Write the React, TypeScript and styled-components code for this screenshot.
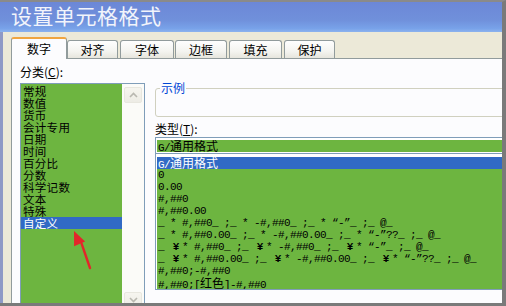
import React from 'react';
import styled, { createGlobalStyle } from 'styled-components';

const GlobalStyle = createGlobalStyle`
  html, body {
    margin: 0;
    padding: 0;
    background: #7a7a7a;
  }
  body {
    font-family: "Noto Sans CJK SC", "Liberation Sans", sans-serif;
    font-size: 12px;
    color: #000;
  }
`;

const Window = styled.div`
  position: relative;
  width: 502px;
  height: 301px;
  border-top: 2px solid #8a8a8a;
  border-right: 4px solid #7a7a7a;
  border-bottom: 3px solid #7a7a7a;
  overflow: hidden;
  display: flex;
  flex-direction: column;
  background: #ece9d8;
`;

const TitleBar = styled.div`
  height: 30px;
  flex-shrink: 0;
  box-sizing: border-box;
  padding: 1px 0 0 11px;
  line-height: 24px;
  font-size: 21px;
  letter-spacing: 0.5px;
  color: #f2f4fb;
  background: linear-gradient(to bottom, #6c87d7 0%, #7090db 60%, #78a2e9 88%, #8cb2ee 100%);
`;

const Body = styled.div`
  flex: 1;
  display: flex;
  flex-direction: column;
  min-height: 0;
  border-left: 3px solid #8e99c6;
  padding-left: 8px;
`;

const TabStrip = styled.div`
  height: 26px;
  flex-shrink: 0;
  display: flex;
  align-items: flex-end;
  position: relative;
  z-index: 1;
`;

const Tab = styled.div<{ $w: number; $active?: boolean; $gap?: number }>`
  box-sizing: border-box;
  width: ${(p) => p.$w}px;
  margin-right: ${(p) => p.$gap ?? 0}px;
  height: ${(p) => (p.$active ? 22 : 18)}px;
  margin-bottom: ${(p) => (p.$active ? -1 : 0)}px;
  border: 1px solid #919b9c;
  border-bottom: none;
  border-top: ${(p) => (p.$active ? '2px solid #f0a540' : '1px solid #919b9c')};
  border-radius: 3px 3px 0 0;
  background: ${(p) =>
    p.$active ? '#fcfcfe' : 'linear-gradient(to bottom, #fefefe 0%, #f4f4f0 60%, #e6e5dd 100%)'};
  display: flex;
  justify-content: center;
  padding-top: ${(p) => (p.$active ? 3 : 2)}px;
  line-height: 13px;
  font-size: 12px;
`;

const Panel = styled.div`
  flex: 1;
  min-height: 0;
  display: flex;
  gap: 10px;
  background: #fcfcfe;
  border-top: 1px solid #919b9c;
  border-left: 1px solid #919b9c;
  padding-left: 8px;
`;

const LeftCol = styled.div`
  width: 125px;
  flex-shrink: 0;
  display: flex;
  flex-direction: column;
`;

const Label = styled.div<{ $top: number }>`
  margin-top: ${(p) => p.$top}px;
  line-height: 14px;
  height: 14px;
  font-size: 12px;
  u {
    text-decoration: underline;
    text-underline-offset: 1px;
  }
`;

const CategoryBox = styled.div`
  margin-top: 4px;
  box-sizing: border-box;
  height: 228px;
  flex-shrink: 0;
  display: flex;
  border: 1px solid #7f9db9;
`;

const CategoryItems = styled.div`
  flex: 1;
  background: #6db540;
  padding-top: 1px;
`;

const Item = styled.div<{ $selected?: boolean }>`
  height: 12px;
  line-height: 12px;
  padding-left: 2px;
  font-size: 11.5px;
  letter-spacing: 0.3px;
  white-space: pre;
  background: ${(p) => (p.$selected ? '#316ac5' : 'transparent')};
  color: ${(p) => (p.$selected ? '#fff' : '#000')};
`;

const ScrollBar = styled.div`
  width: 22px;
  box-sizing: border-box;
  background: #fbfbf8;
  padding: 3px 1px 2px 2px;
  display: flex;
  flex-direction: column;
  justify-content: space-between;
`;

const ScrollButton = styled.div`
  width: 18px;
  height: 16px;
  box-sizing: border-box;
  border: 1px solid #e8e7df;
  border-radius: 2px;
  background: linear-gradient(to bottom, #f6f5ef 0%, #edece5 100%);
  display: flex;
  align-items: center;
  justify-content: center;
`;

const RightCol = styled.div`
  width: 362px;
  flex-shrink: 0;
  display: flex;
  flex-direction: column;
  padding-top: 23px;
`;

const Sample = styled.fieldset`
  margin: 0;
  padding: 0;
  min-width: 0;
  box-sizing: border-box;
  height: 35px;
  border: 1px solid #d0d0bf;
  border-radius: 3px;
`;

const SampleLegend = styled.legend`
  margin-left: 4px;
  padding: 0 1px;
  font-size: 12px;
  line-height: 12px;
  color: #0046d5;
`;

const TypeInput = styled.div`
  margin-top: 1px;
  border: 1px solid #7f9db9;
  border-bottom: none;
  padding: 2px 0 1px 1px;
  background: #fff;
`;

const FormatRow = styled.div<{ $selected?: boolean }>`
  height: 12px;
  line-height: 12px;
  padding-left: 1px;
  font-family: "Liberation Mono", monospace;
  font-size: 11px;
  letter-spacing: -0.6px;
  white-space: pre;
  background: ${(p) => (p.$selected ? '#316ac5' : '#6db540')};
  color: ${(p) => (p.$selected ? '#fff' : '#000')};
`;

const TypeList = styled.div`
  box-sizing: border-box;
  height: 137px;
  border: 1px solid #7f9db9;
  padding: 3px 0 0 1px;
  background: #fff;
  overflow: hidden;
`;

const Han = styled.span`
  font-family: "Noto Sans CJK SC", sans-serif;
  font-size: 12px;
  line-height: 12px;
  letter-spacing: 0;
`;

const Yen = styled.span`
  display: inline-block;
  width: 12px;
  text-align: center;
  font-weight: bold;
  letter-spacing: 0;
`;

const Annotation = styled.svg`
  position: absolute;
  left: 68px;
  top: 222px;
  pointer-events: none;
`;

const categories = ['常规', '数值', '货币', '会计专用', '日期', '时间', '百分比', '分数', '科学记数', '文本', '特殊', '自定义'];

const formats = [
  'G/通用格式',
  '0',
  '0.00',
  '#,##0',
  '#,##0.00',
  '_ * #,##0_ ;_ * -#,##0_ ;_ * “-”_ ;_ @_',
  '_ * #,##0.00_ ;_ * -#,##0.00_ ;_ * “-”??_ ;_ @_',
  '_ ¥* #,##0_ ;_ ¥* -#,##0_ ;_ ¥* “-”_ ;_ @_',
  '_ ¥* #,##0.00_ ;_ ¥* -#,##0.00_ ;_ ¥* “-”??_ ;_ @_',
  '#,##0;-#,##0',
  '#,##0;[红色]-#,##0',
];

const tabs = [
  { label: '数字', w: 56, gap: 0, active: true },
  { label: '对齐', w: 51, gap: 2 },
  { label: '字体', w: 54, gap: 1 },
  { label: '边框', w: 52, gap: 2 },
  { label: '填充', w: 53, gap: 2 },
  { label: '保护', w: 51, gap: 0 },
];

function renderFormat(text: string) {
  return text
    .split(/([\u4e00-\u9fff]+|¥)/)
    .filter(Boolean)
    .map((part, i) => {
      if (part === '¥') return <Yen key={i}>¥</Yen>;
      if (/[\u4e00-\u9fff]/.test(part)) return <Han key={i}>{part}</Han>;
      return <React.Fragment key={i}>{part}</React.Fragment>;
    });
}

function Chevron({ up }: { up?: boolean }) {
  return (
    <svg width="9" height="6" viewBox="0 0 9 6">
      <path
        d={up ? 'M1 5 L4.5 1.5 L8 5' : 'M1 1 L4.5 4.5 L8 1'}
        fill="none"
        stroke="#b9b8b0"
        strokeWidth="1.6"
      />
    </svg>
  );
}

export default function App() {
  return (
    <>
      <GlobalStyle />
      <Window>
        <TitleBar>设置单元格格式</TitleBar>
        <Body>
          <TabStrip>
            {tabs.map((t) => (
              <Tab key={t.label} $w={t.w} $gap={t.gap} $active={t.active}>
                {t.label}
              </Tab>
            ))}
          </TabStrip>
          <Panel>
            <LeftCol>
              <Label $top={6}>
                分类(<u>C</u>):
              </Label>
              <CategoryBox>
                <CategoryItems>
                  {categories.map((c) => (
                    <Item key={c} $selected={c === '自定义'}>
                      {c}
                    </Item>
                  ))}
                </CategoryItems>
                <ScrollBar>
                  <ScrollButton>
                    <Chevron up />
                  </ScrollButton>
                  <ScrollButton>
                    <Chevron />
                  </ScrollButton>
                </ScrollBar>
              </CategoryBox>
            </LeftCol>
            <RightCol>
              <Sample>
                <SampleLegend>示例</SampleLegend>
              </Sample>
              <Label $top={5}>
                类型(<u>T</u>):
              </Label>
              <TypeInput>
                <FormatRow>{renderFormat('G/通用格式')}</FormatRow>
              </TypeInput>
              <TypeList>
                {formats.map((f, i) => (
                  <FormatRow key={f} $selected={i === 0}>
                    {renderFormat(f)}
                  </FormatRow>
                ))}
              </TypeList>
            </RightCol>
          </Panel>
        </Body>
        <Annotation width="30" height="48" viewBox="0 0 30 48">
          <path d="M13.6 19.6 L22 44" stroke="#e3262a" strokeWidth="2.4" strokeLinecap="round" />
          <polygon points="6,7 17.1,17.5 6.1,22.3" fill="#e3262a" />
        </Annotation>
      </Window>
    </>
  );
}
